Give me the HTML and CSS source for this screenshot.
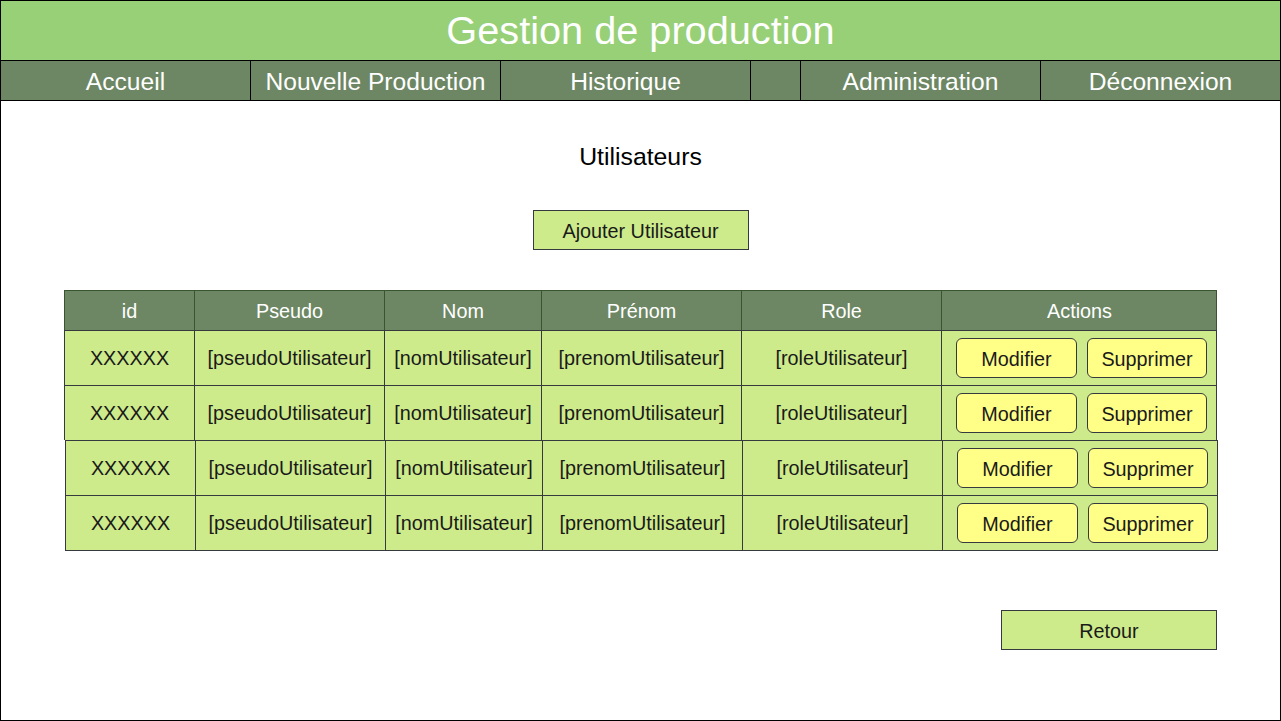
FILE: index.html
```html
<!DOCTYPE html>
<html lang="fr">
<head>
<meta charset="utf-8">
<title>Gestion de production</title>
<link rel="stylesheet" href="styles.css">
</head>
<body>
<div class="page">
  <header class="topbar">Gestion de production</header>
  <nav class="nav">
    <div class="nav-item">Accueil</div>
    <div class="nav-item">Nouvelle Production</div>
    <div class="nav-item">Historique</div>
    <div class="nav-item"></div>
    <div class="nav-item">Administration</div>
    <div class="nav-item">Déconnexion</div>
  </nav>
  <main class="main">
    <h1 class="title">Utilisateurs</h1>
    <div class="btn-green add">Ajouter Utilisateur</div>
    <div class="table">
      <div class="row head">
        <div class="cell">id</div>
        <div class="cell">Pseudo</div>
        <div class="cell">Nom</div>
        <div class="cell">Prénom</div>
        <div class="cell">Role</div>
        <div class="cell">Actions</div>
      </div>
      <div class="row">
        <div class="cell">XXXXXX</div>
        <div class="cell">[pseudoUtilisateur]</div>
        <div class="cell">[nomUtilisateur]</div>
        <div class="cell">[prenomUtilisateur]</div>
        <div class="cell">[roleUtilisateur]</div>
        <div class="cell actions"><span class="btn-yellow">Modifier</span><span class="btn-yellow">Supprimer</span></div>
      </div>
      <div class="row">
        <div class="cell">XXXXXX</div>
        <div class="cell">[pseudoUtilisateur]</div>
        <div class="cell">[nomUtilisateur]</div>
        <div class="cell">[prenomUtilisateur]</div>
        <div class="cell">[roleUtilisateur]</div>
        <div class="cell actions"><span class="btn-yellow">Modifier</span><span class="btn-yellow">Supprimer</span></div>
      </div>
      <div class="row shifted">
        <div class="cell">XXXXXX</div>
        <div class="cell">[pseudoUtilisateur]</div>
        <div class="cell">[nomUtilisateur]</div>
        <div class="cell">[prenomUtilisateur]</div>
        <div class="cell">[roleUtilisateur]</div>
        <div class="cell actions"><span class="btn-yellow">Modifier</span><span class="btn-yellow">Supprimer</span></div>
      </div>
      <div class="row shifted last">
        <div class="cell">XXXXXX</div>
        <div class="cell">[pseudoUtilisateur]</div>
        <div class="cell">[nomUtilisateur]</div>
        <div class="cell">[prenomUtilisateur]</div>
        <div class="cell">[roleUtilisateur]</div>
        <div class="cell actions"><span class="btn-yellow">Modifier</span><span class="btn-yellow">Supprimer</span></div>
      </div>
    </div>
    <div class="footer-row">
      <div class="btn-green back">Retour</div>
    </div>
  </main>
</div>
</body>
</html>
```

FILE: styles.css
```css
* { box-sizing: border-box; }
html, body { margin: 0; padding: 0; background: #fff; }
body { font-family: "Liberation Sans", Arial, sans-serif; color: #1a1a1a; }

.page {
  width: 1281px;
  height: 721px;
  border: 1px solid #000;
  overflow: hidden;
  display: flex;
  flex-direction: column;
}

.topbar {
  height: 59px;
  background: #97d077;
  color: #fff;
  font-size: 39.7px;
  line-height: 59px;
  text-align: center;
}

.nav {
  display: grid;
  grid-template-columns: 249px 250px 250px 50px 240px 240px;
  height: 41px;
  background: #6d8764;
  border-top: 1px solid #000;
  border-bottom: 1px solid #000;
}
.nav-item {
  color: #fff;
  font-size: 24.6px;
  line-height: 39px;
  padding-top: 1px;
  text-align: center;
  white-space: nowrap;
  border-left: 1px solid #000;
}
.nav-item:first-child { border-left: none; }

.main {
  flex: 1;
  display: flex;
  flex-direction: column;
  align-items: center;
  padding: 41px 63px 0 63px;
}

.title {
  margin: 0;
  font-weight: normal;
  font-size: 24.8px;
  line-height: 30px;
  color: #000;
}

.btn-green {
  background: #cdeb8b;
  border: 1px solid #36393d;
  font-size: 19.8px;
  height: 40px;
  line-height: 38px;
  padding-top: 1px;
  text-align: center;
}
.add {
  width: 216px;
  margin-top: 38px;
}

.table {
  width: 1153px;
  margin-top: 40px;
  align-self: flex-start;
}
.row {
  display: grid;
  grid-template-columns: 130px 190px 157px 200px 200px 276px;
  width: 1153px;
  height: 55px;
  background: #cdeb8b;
  border-right: 1px solid #36393d;
}
.row .cell {
  border-left: 1px solid #36393d;
  border-top: 1px solid #36393d;
  display: flex;
  align-items: center;
  justify-content: center;
  padding-top: 1px;
  font-size: 19.8px;
  white-space: nowrap;
}
.row.head {
  height: 40px;
  background: #6d8764;
  border-right-color: #3a5431;
}
.row.head .cell {
  color: #fff;
  border-color: #3a5431;
}
.row.shifted { margin-left: 1px; }
.row.last { height: 56px; border-bottom: 1px solid #36393d; }

.row .cell.actions {
  justify-content: flex-start;
  padding-top: 0;
  padding-left: 14px;
  gap: 10px;
}
.btn-yellow {
  display: inline-block;
  width: 121px;
  height: 40px;
  line-height: 38px;
  padding-top: 1px;
  text-align: center;
  background: #ffff88;
  border: 1px solid #36393d;
  border-radius: 6px;
  font-size: 19.8px;
}
.btn-yellow + .btn-yellow { width: 120px; }

.footer-row {
  width: 100%;
  display: flex;
  justify-content: flex-end;
  margin-top: 59px;
}
.back { width: 216px; }
```
